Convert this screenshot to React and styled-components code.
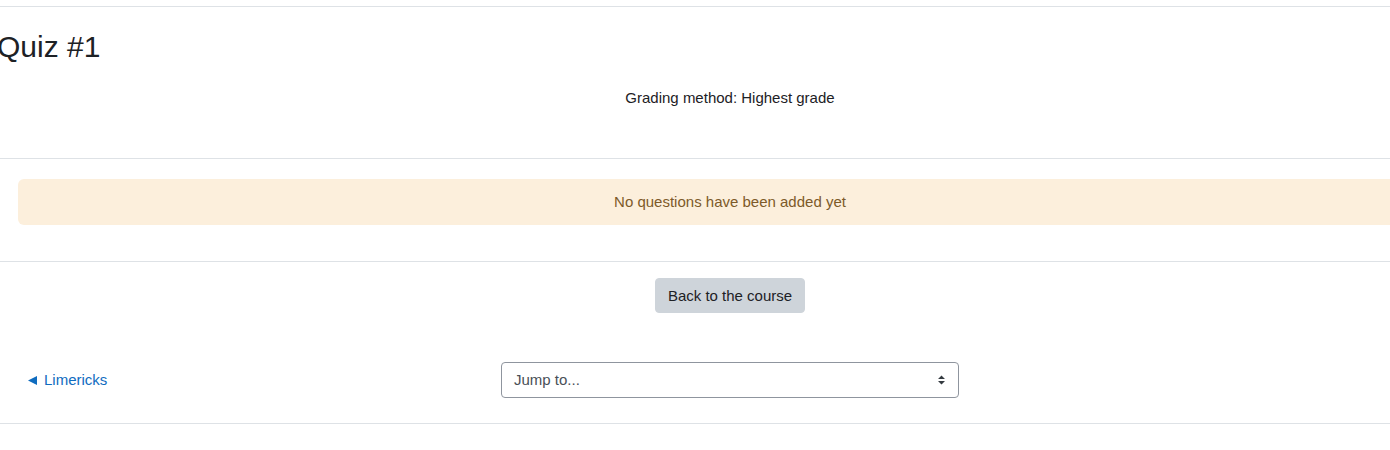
import React from 'react';
import styled, { createGlobalStyle } from 'styled-components';

const GlobalStyle = createGlobalStyle`
  html, body {
    margin: 0;
    padding: 0;
    background: #fff;
    overflow: hidden;
  }
  body {
    font-family: "Liberation Sans", Arial, sans-serif;
    font-size: 15px;
    line-height: 1.5;
    color: #1d2125;
  }
`;

const Page = styled.div`
  width: 1460px;
  margin-top: 6px;
  border-top: 1px solid #dee2e6;
`;

const Heading = styled.h2`
  margin: 22px 0 0 -3px;
  font-size: 30px;
  font-weight: 400;
  line-height: 1.2;
`;

const Info = styled.p`
  margin: 22px 0 0;
  text-align: center;
`;

const Section = styled.div`
  margin-top: ${(p) => p.$gap}px;
  border-top: 1px solid #dee2e6;
`;

const Alert = styled.div`
  margin: 20px 18px 0;
  padding: 12px 16px;
  background: #fcefdc;
  color: #7d5a29;
  border-radius: 6px;
  text-align: center;
`;

const ButtonRow = styled.div`
  display: flex;
  justify-content: center;
  padding-top: 16px;
`;

const Button = styled.button`
  font: inherit;
  color: #1d2125;
  background: #ced4da;
  border: 1px solid #ced4da;
  border-radius: 4px;
  padding: 6px 12px;
  line-height: 21px;
`;

const NavRow = styled.div`
  display: grid;
  grid-template-columns: 1fr 458px 1fr;
  align-items: center;
  margin-top: 49px;
  padding-bottom: 25px;
  border-bottom: 1px solid #dee2e6;
`;

const PrevLink = styled.a`
  padding-left: 28px;
  color: #0f6cbf;
  text-decoration: none;
  display: flex;
  align-items: center;
  gap: 7px;
`;

const Select = styled.div`
  height: 36px;
  box-sizing: border-box;
  border: 1px solid #8f959e;
  border-radius: 4px;
  padding: 0 12px;
  display: flex;
  align-items: center;
  justify-content: space-between;
  color: #495057;
`;

const Triangle = () => (
  <svg width="9" height="9" viewBox="0 0 9 9">
    <path d="M0 4.5 L9 0 L9 9 Z" fill="#0f6cbf" />
  </svg>
);

const Arrows = () => (
  <svg width="9" height="12" viewBox="0 0 9 12">
    <path d="M4.5 1.5 L8 5 L1 5 Z M1 7 L8 7 L4.5 10.5 Z" fill="#343a40" />
  </svg>
);

export default function App() {
  return (
    <>
      <GlobalStyle />
      <Page>
        <Heading>Quiz #1</Heading>
        <Info>Grading method: Highest grade</Info>
        <Section $gap={48}>
          <Alert>No questions have been added yet</Alert>
        </Section>
        <Section $gap={36}>
          <ButtonRow>
            <Button>Back to the course</Button>
          </ButtonRow>
        </Section>
        <NavRow>
          <PrevLink href="#">
            <Triangle />
            Limericks
          </PrevLink>
          <Select>
            <span>Jump to...</span>
            <Arrows />
          </Select>
          <div />
        </NavRow>
      </Page>
    </>
  );
}
